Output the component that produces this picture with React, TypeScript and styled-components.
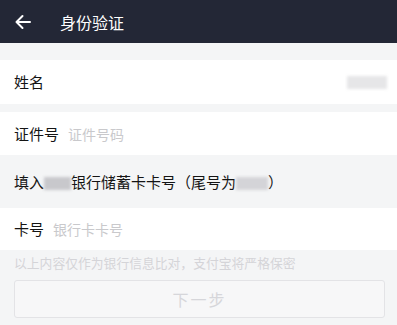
import styled, {createGlobalStyle} from "styled-components";

const GlobalStyle = createGlobalStyle`
  html, body {
    margin: 0;
    padding: 0;
    background: #f4f5f6;
  }
  body {
    font-family: "Noto Sans CJK SC", "Noto Sans", sans-serif;
  }
`;

const Page = styled.div`
  width: 397px;
  height: 325px;
  overflow: hidden;
  display: flex;
  flex-direction: column;
  background: #f4f5f6;
`;

const Header = styled.header`
  height: 43px;
  flex: 0 0 43px;
  display: flex;
  align-items: center;
  background: #232736;
  padding-left: 14px;
  box-sizing: border-box;
`;

const BackButton = styled.div`
  width: 18px;
  height: 18px;
  display: flex;
  align-items: center;
  justify-content: center;
`;

const Title = styled.div`
  margin-left: 28px;
  color: #ffffff;
  font-size: 16px;
  line-height: 20px;
`;

const Row = styled.div<{ $height: number; $gray?: boolean }>`
  height: ${p => p.$height}px;
  flex: 0 0 ${p => p.$height}px;
  display: flex;
  align-items: center;
  padding: 0 10px 0 14px;
  box-sizing: border-box;
  background: ${p => (p.$gray ? "#f4f5f6" : "#ffffff")};
`;

const Gap = styled.div<{ $height: number }>`
  height: ${p => p.$height}px;
  flex: 0 0 ${p => p.$height}px;
`;

const Label = styled.span`
  font-size: 15px;
  color: #141414;
  line-height: 20px;
  white-space: nowrap;
`;

const Placeholder = styled.span`
  margin-left: 9px;
  font-size: 14px;
  color: #c9c9cc;
  line-height: 20px;
  white-space: nowrap;
`;

const Blur = styled.span<{ $w: number; $tone: string }>`
  display: inline-block;
  width: ${p => p.$w}px;
  height: 13px;
  background: ${p => p.$tone};
  filter: blur(1.5px);
  vertical-align: middle;
`;

const Spacer = styled.div`
  flex: 1;
`;

const Notice = styled.div`
  padding: 4px 14px 0;
  font-size: 12.8px;
  line-height: 18px;
  color: #d4d4d8;
  white-space: nowrap;
`;

const NextButton = styled.div`
  margin: 8px 12px 0 14px;
  height: 38px;
  border: 1px solid #e3e3e6;
  border-radius: 3px;
  background: #f7f7f8;
  display: flex;
  align-items: center;
  justify-content: center;
  font-size: 16px;
  color: #d6d6da;
  box-sizing: border-box;
  letter-spacing: 2px;
`;

export default function App() {
  return (
    <>
      <GlobalStyle />
      <Page>
        <Header>
          <BackButton>
            <svg width="16" height="16" viewBox="0 0 16 16" fill="none">
              <path d="M15 8H1.5M7.5 2L1.5 8l6 6" stroke="#fff" strokeWidth="2" strokeLinecap="round" strokeLinejoin="round" />
            </svg>
          </BackButton>
          <Title>身份验证</Title>
        </Header>
        <Gap $height={17} />
        <Row $height={44}>
          <Label>姓名</Label>
          <Spacer />
          <Blur $w={40} $tone="#e6e6e8" />
        </Row>
        <Gap $height={8} />
        <Row $height={43}>
          <Label>证件号</Label>
          <Placeholder>证件号码</Placeholder>
        </Row>
        <Row $height={53} $gray>
          <Label>
            填入<Blur $w={27} $tone="#c8c8cc" />银行储蓄卡卡号（尾号为<Blur $w={32} $tone="#d4d4d8" />）
          </Label>
        </Row>
        <Row $height={42}>
          <Label>卡号</Label>
          <Placeholder>银行卡卡号</Placeholder>
        </Row>
        <Notice>以上内容仅作为银行信息比对，支付宝将严格保密</Notice>
        <NextButton>下一步</NextButton>
      </Page>
    </>
  );
}
